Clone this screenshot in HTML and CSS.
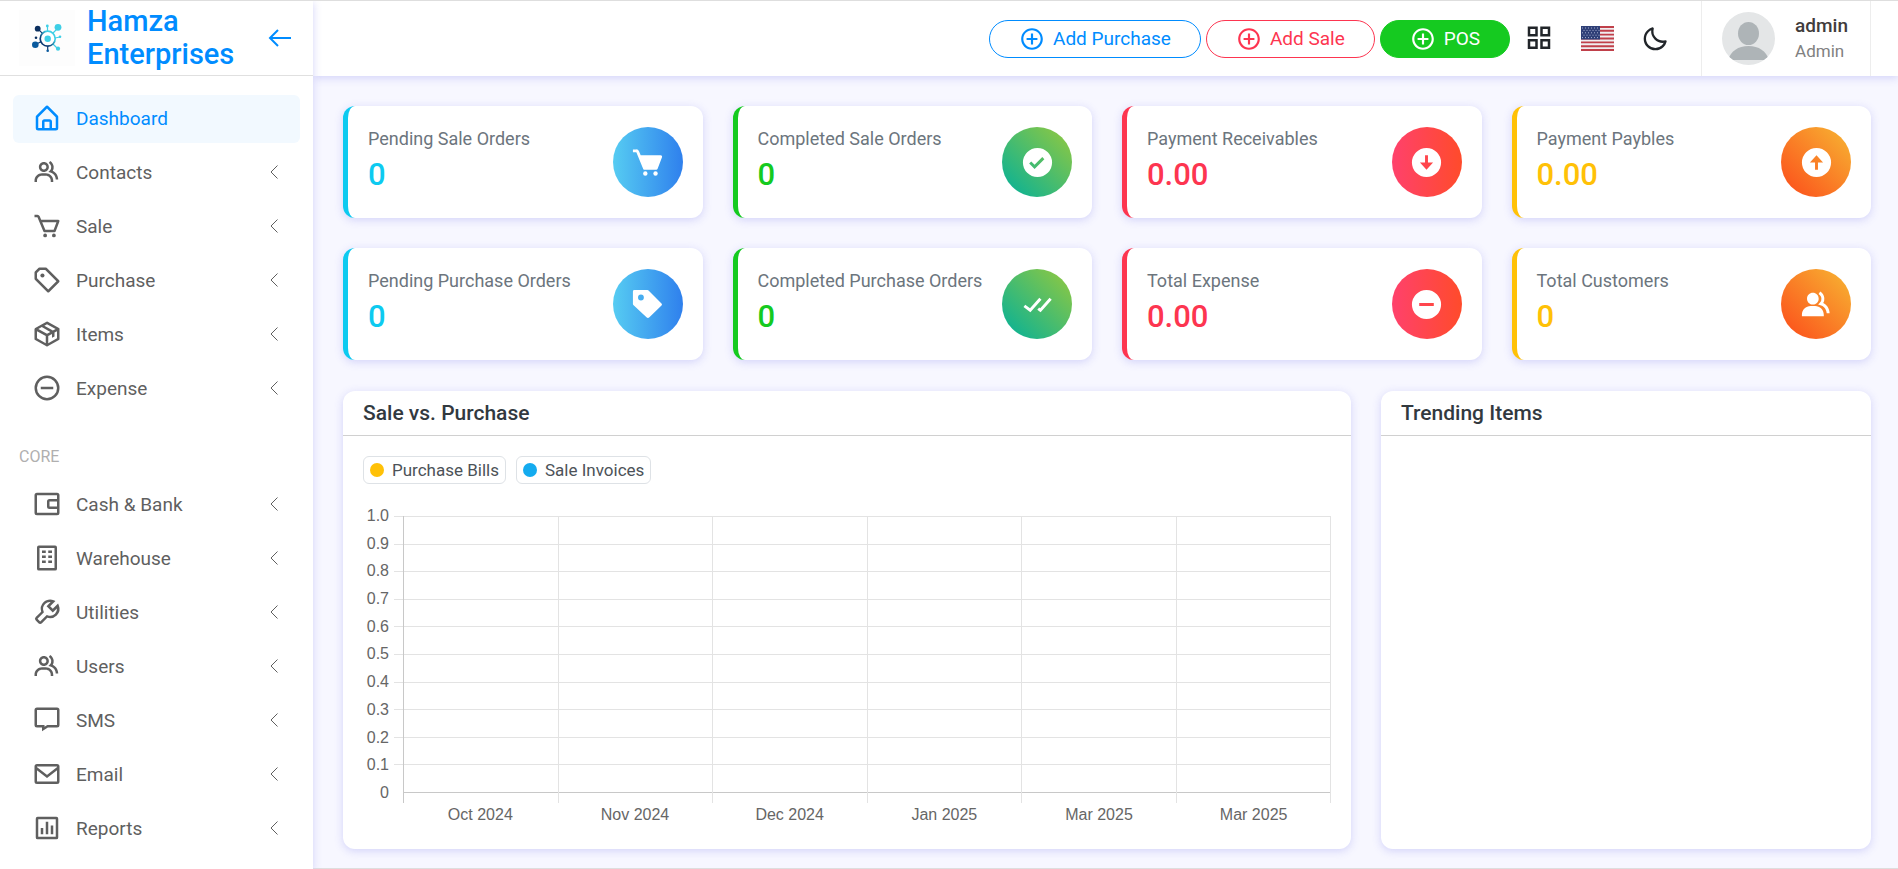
FILE: index.html
```html
<!DOCTYPE html>
<html lang="en">
<head>
<meta charset="utf-8">
<meta name="viewport" content="width=device-width, initial-scale=1">
<title>Dashboard - Hamza Enterprises</title>
<link rel="stylesheet" href="styles.css">
</head>
<body>
<svg class="sprite" aria-hidden="true">
  <symbol id="i-group" viewBox="0 0 24 24"><path d="M16.604 11.048a5.67 5.67 0 0 0 .751-3.44c-.179-1.784-1.175-3.361-2.803-4.44l-1.105 1.666c1.119.742 1.8 1.799 1.918 2.974a3.693 3.693 0 0 1-1.072 2.986l-1.192 1.192 1.618.475C18.951 13.701 19 17.957 19 18h2c0-1.789-.956-5.285-4.396-6.952z"/><path d="M9.5 12c2.206 0 4-1.794 4-4s-1.794-4-4-4-4 1.794-4 4 1.794 4 4 4zm0-6c1.103 0 2 .897 2 2s-.897 2-2 2-2-.897-2-2 .897-2 2-2zm1.5 7H8c-3.309 0-6 2.691-6 6v1h2v-1c0-2.206 1.794-4 4-4h3c2.206 0 4 1.794 4 4v1h2v-1c0-3.309-2.691-6-6-6z"/></symbol>
  <symbol id="i-plus" viewBox="0 0 24 24"><path d="M13 7h-2v4H7v2h4v4h2v-4h4v-2h-4z"/><path d="M12 2C6.486 2 2 6.486 2 12s4.486 10 10 10 10-4.486 10-10S17.514 2 12 2zm0 18c-4.411 0-8-3.589-8-8s3.589-8 8-8 8 3.589 8 8-3.589 8-8 8z"/></symbol>
  <symbol id="i-chevron" viewBox="0 0 8 14"><path d="M7.500.500L1 7l6.500 6.500" fill="none" stroke="currentColor"/></symbol>
</svg>

<aside class="sidebar">
  <div class="brand">
    <svg class="brand-logo" viewBox="0 0 56 56" role="img" aria-label="Logo">
      <defs><linearGradient id="ring" x1="0" y1="1" x2="1" y2="0"><stop offset=".3" stop-color="#0b3a72"/><stop offset=".7" stop-color="#3ecfe6"/></linearGradient></defs>
      <rect width="56" height="56" fill="#fdfdfd"/>
      <g stroke-width="1.200"><path stroke="#0b3a72" d="M18.700 18.700l5 5M16.500 34.500l6-3M28.700 36v4"/><path stroke="#3ecfe6" d="M34 23l5-5M34 34l5 5M28.500 21v-5M36 28l5-1"/></g>
      <circle cx="28.700" cy="28.700" r="7.500" fill="#fff" stroke="url(#ring)" stroke-width="1.700"/>
      <g fill="#3ecfe6"><circle cx="28.700" cy="28.700" r="3.200"/><circle cx="39" cy="17.300" r="3.400"/><circle cx="39" cy="38.700" r="2.100"/><circle cx="28.300" cy="16" r="1.400"/><circle cx="41" cy="26.700" r="1.300"/></g>
      <g fill="#0b2f5f"><circle cx="18.700" cy="18.700" r="2.900"/><circle cx="17" cy="27.700" r="1.300"/></g>
      <g fill="#0a5a9e"><circle cx="16.300" cy="34.700" r="3.300"/><circle cx="28.700" cy="40.700" r="1.300"/></g>
    </svg>
    <div class="brand-name">Hamza Enterprises</div>
    <button class="icon-button brand-toggle" aria-label="Collapse menu"><svg viewBox="0 0 24 20" fill="none" stroke="currentColor" stroke-width="2"><path d="M23 10H2M10 2l-8 8 8 8"/></svg></button>
  </div>
  <nav class="menu">
    <a class="menu-item active" href="#"><svg class="menu-icon" viewBox="0 0 24 24"><path d="M5 22h14a2 2 0 0 0 2-2v-9a1 1 0 0 0-.29-.71l-8-8a1 1 0 0 0-1.410 0l-8 8A1 1 0 0 0 3 11v9a2 2 0 0 0 2 2zm5-2v-5h4v5zm-5-8.590 7-7 7 7V20h-3v-5a2 2 0 0 0-2-2h-4a2 2 0 0 0-2 2v5H5z"/></svg><span>Dashboard</span></a>
    <a class="menu-item" href="#"><svg class="menu-icon"><use href="#i-group"/></svg><span>Contacts</span><svg class="chevron"><use href="#i-chevron"/></svg></a>
    <a class="menu-item" href="#"><svg class="menu-icon" viewBox="0 0 24 24"><path d="M21.822 7.431A1 1 0 0 0 21 7H7.333L6.179 4.230A1.994 1.994 0 0 0 4.333 3H2v2h2.333l4.744 11.385A1 1 0 0 0 10 17h8c.417 0 .79-.259.937-.648l3-8a1 1 0 0 0-.115-.921zM17.307 15h-6.640l-2.500-6h11.390l-2.250 6z"/><circle cx="10.500" cy="19.500" r="1.500"/><circle cx="17.500" cy="19.500" r="1.500"/></svg><span>Sale</span><svg class="chevron"><use href="#i-chevron"/></svg></a>
    <a class="menu-item" href="#"><svg class="menu-icon" viewBox="0 0 24 24"><path d="M11.707 2.293A.997.997 0 0 0 11 2H6a.997.997 0 0 0-.707.293l-3 3A.996.996 0 0 0 2 6v5c0 .266.105.52.293.707l10 10a.997.997 0 0 0 1.414 0l8-8a.999.999 0 0 0 0-1.414l-10-10zM13 19.586l-9-9V6.414L6.414 4h4.172l9 9L13 19.586z"/><circle cx="8.353" cy="8.353" r="1.647"/></svg><span>Purchase</span><svg class="chevron"><use href="#i-chevron"/></svg></a>
    <a class="menu-item" href="#"><svg class="menu-icon" viewBox="0 0 24 24"><path d="M22 8a.76.76 0 0 0 0-.21v-.08a.77.77 0 0 0-.07-.16.35.35 0 0 0-.05-.08l-.1-.13-.08-.06-.12-.09-9-5a1 1 0 0 0-1 0l-9 5-.09.07-.11.08a.41.41 0 0 0-.07.11.39.39 0 0 0-.08.1.59.59 0 0 0-.06.14.3.3 0 0 0 0 .1A.76.76 0 0 0 2 8v8a1 1 0 0 0 .52.87l9 5a.75.75 0 0 0 .13.06h.1a1.060 1.060 0 0 0 .5 0h.1l.14-.06 9-5A1 1 0 0 0 22 16V8zm-10 3.870L5.060 8l2.760-1.520 6.830 3.900zm0-7.720L18.940 8 16.700 9.250 9.870 5.340zM4 9.700l7 3.920v5.680l-7-3.890zm9 9.600v-5.680l3-1.680V15l2-1v-3.180l2-1.110v5.700z"/></svg><span>Items</span><svg class="chevron"><use href="#i-chevron"/></svg></a>
    <a class="menu-item" href="#"><svg class="menu-icon" viewBox="0 0 24 24"><path d="M7 11h10v2H7z"/><circle cx="12" cy="12" r="9" class="line"/></svg><span>Expense</span><svg class="chevron"><use href="#i-chevron"/></svg></a>
    <div class="menu-label">CORE</div>
    <a class="menu-item" href="#"><svg class="menu-icon" viewBox="0 0 24 24"><g class="line"><rect x="3" y="4" width="18" height="16" rx="1"/><path d="M21 9h-7a1 1 0 0 0-1 1v4a1 1 0 0 0 1 1h7"/></g></svg><span>Cash &amp; Bank</span><svg class="chevron"><use href="#i-chevron"/></svg></a>
    <a class="menu-item" href="#"><svg class="menu-icon" viewBox="0 0 24 24"><rect class="line" x="5" y="3" width="14" height="18" rx=".5"/><path d="M8 6h3v2H8zm5 0h3v2h-3zM8 10h3v2H8zm5 0h3v2h-3zM8 14h3v2H8zm5 0h3v2h-3z"/></svg><span>Warehouse</span><svg class="chevron"><use href="#i-chevron"/></svg></a>
    <a class="menu-item" href="#"><svg class="menu-icon" viewBox="0 0 24 24"><path fill-rule="evenodd" d="M5.122 21c.378.378.88.586 1.414.586S7.572 21.378 7.950 21l4.336-4.336a7.495 7.495 0 0 0 2.217.333 7.446 7.446 0 0 0 5.302-2.195 7.484 7.484 0 0 0 1.632-8.158l-.57-1.388-4.244 4.243-2.121-2.122 4.243-4.243-1.389-.571A7.478 7.478 0 0 0 14.499 2c-2.003 0-3.886.78-5.301 2.196a7.479 7.479 0 0 0-1.862 7.518L3 16.050a2.001 2.001 0 0 0 0 2.828zM9.548 12.208l-.254-.616a5.486 5.486 0 0 1 1.196-5.983 5.470 5.470 0 0 1 4.400-1.550l-3.218 3.318 4.951 4.950 3.318-3.220a5.470 5.470 0 0 1-1.550 4.280 5.490 5.490 0 0 1-5.980 1.190l-.62-.25-5.256 5.256-2.122-2.122z"/></svg><span>Utilities</span><svg class="chevron"><use href="#i-chevron"/></svg></a>
    <a class="menu-item" href="#"><svg class="menu-icon"><use href="#i-group"/></svg><span>Users</span><svg class="chevron"><use href="#i-chevron"/></svg></a>
    <a class="menu-item" href="#"><svg class="menu-icon" viewBox="0 0 24 24"><path class="line" d="M4 3h16a1 1 0 0 1 1 1v12a1 1 0 0 1-1 1h-7.500L9 19.200V17H4a1 1 0 0 1-1-1V4a1 1 0 0 1 1-1z"/></svg><span>SMS</span><svg class="chevron"><use href="#i-chevron"/></svg></a>
    <a class="menu-item" href="#"><svg class="menu-icon" viewBox="0 0 24 24"><g class="line"><rect x="3" y="5" width="18" height="14" rx="1"/><path d="M3 7l9 7 9-7"/></g></svg><span>Email</span><svg class="chevron"><use href="#i-chevron"/></svg></a>
    <a class="menu-item" href="#"><svg class="menu-icon" viewBox="0 0 24 24"><rect class="line" x="4" y="4" width="16" height="16" rx=".5"/><path d="M7 12h2v5H7zM11 7h2v10h-2zM15 10h2v7h-2z"/></svg><span>Reports</span><svg class="chevron"><use href="#i-chevron"/></svg></a>
  </nav>
</aside>

<div class="page">
  <header class="topbar">
    <div class="actions">
      <button class="pill pill-primary"><svg class="pill-icon"><use href="#i-plus"/></svg>Add Purchase</button>
      <button class="pill pill-danger"><svg class="pill-icon"><use href="#i-plus"/></svg>Add Sale</button>
      <button class="pill pill-success"><svg class="pill-icon"><use href="#i-plus"/></svg>POS</button>
    </div>
    <div class="tools">
      <button class="icon-button" aria-label="Apps"><svg width="30" height="30" viewBox="0 0 24 24" fill="none" stroke="currentColor" stroke-width="2"><path d="M4 3h6v6H4zM14 3h6v6h-6zM4 13h6v6H4zM14 13h6v6h-6z"/></svg></button>
      <button class="icon-button" aria-label="Language">
        <svg class="flag" width="33" height="25" viewBox="0 0 33 25"><rect width="33" height="25" fill="#f0eef0"/><path stroke="#c0404a" stroke-width="1.920" d="M0 .96h33M0 4.800h33M0 8.650h33M0 12.500h33M0 16.350h33M0 20.200h33M0 24.040h33"/><rect width="19" height="13.500" fill="#2f3f77"/><path stroke="#a9b2d0" stroke-width="1" stroke-dasharray="1 2" d="M1 2h17M2.500 4.400h16M1 6.800h17M2.500 9.200h16M1 11.600h17"/></svg>
      </button>
      <button class="icon-button" aria-label="Dark mode"><svg width="28" height="28" viewBox="0 0 24 24" fill="currentColor"><path d="M20.742 13.045a8.088 8.088 0 0 1-2.077.271c-2.135 0-4.140-.83-5.646-2.336a8.025 8.025 0 0 1-2.064-7.723A1 1 0 0 0 9.730 2.034a10.014 10.014 0 0 0-4.489 2.582c-3.898 3.898-3.898 10.243 0 14.143a9.937 9.937 0 0 0 7.072 2.930 9.930 9.930 0 0 0 7.070-2.929 10.007 10.007 0 0 0 2.583-4.491 1.001 1.001 0 0 0-1.224-1.224zm-2.772 4.301a7.947 7.947 0 0 1-5.656 2.343 7.953 7.953 0 0 1-5.658-2.344c-3.118-3.119-3.118-8.195 0-11.314a7.923 7.923 0 0 1 2.060-1.483 10.027 10.027 0 0 0 2.890 7.848 9.972 9.972 0 0 0 7.848 2.891 8.036 8.036 0 0 1-1.484 2.059z"/></svg></button>
    </div>
    <a class="user" href="#">
      <svg class="avatar" viewBox="0 0 53 53"><defs><clipPath id="disc"><circle cx="26.500" cy="26.500" r="26.500"/></clipPath></defs><g clip-path="url(#disc)"><rect width="53" height="53" fill="#e4e6e7"/><g fill="#aeb4b7"><ellipse cx="26.500" cy="21.500" rx="10.500" ry="11.500"/><path d="M6 48c3-9 10-14 20.500-14S44 39 47 48z"/></g></g></svg>
      <span class="user-text"><span class="user-name">admin</span><span class="user-role">Admin</span></span>
    </a>
  </header>

  <main class="content">
    <section class="stats">
      <article class="stat info"><div><p>Pending Sale Orders</p><strong>0</strong></div><span class="badge blue"><svg viewBox="0 0 24 24"><path d="M21.822 7.431A1 1 0 0 0 21 7H7.333L6.179 4.230A1.994 1.994 0 0 0 4.333 3H2v2h2.333l4.744 11.385A1 1 0 0 0 10 17h8c.417 0 .79-.259.937-.648l3-8a1 1 0 0 0-.115-.921z"/><circle cx="10.500" cy="19.500" r="1.500"/><circle cx="17.500" cy="19.500" r="1.500"/></svg></span></article>
      <article class="stat success"><div><p>Completed Sale Orders</p><strong>0</strong></div><span class="badge green"><svg viewBox="0 0 24 24"><path fill-rule="evenodd" d="M12 2a10 10 0 1 0 0 20 10 10 0 0 0 0-20zm-1.999 14.413-3.713-3.705L7.700 11.292l2.299 2.295 5.294-5.294 1.414 1.414z"/></svg></span></article>
      <article class="stat danger"><div><p>Payment Receivables</p><strong>0.00</strong></div><span class="badge red"><svg viewBox="0 0 24 24"><path fill-rule="evenodd" d="M12 2a10 10 0 1 0 0 20 10 10 0 0 0 0-20zm0 15-4.500-5H11V7h2v5h3.500z"/></svg></span></article>
      <article class="stat warning"><div><p>Payment Paybles</p><strong>0.00</strong></div><span class="badge orange"><svg viewBox="0 0 24 24"><path fill-rule="evenodd" d="M12 2a10 10 0 1 0 0 20 10 10 0 0 0 0-20zm0 5 4.500 5H13v5h-2v-5H7.500z"/></svg></span></article>
      <article class="stat info"><div><p>Pending Purchase Orders</p><strong>0</strong></div><span class="badge blue"><svg viewBox="0 0 24 24"><path fill-rule="evenodd" d="M12.700 2.400A1 1 0 0 0 12 2H3a1 1 0 0 0-1 1v8.600c0 .3.100.5.300.700l9 8.500a1.500 1.500 0 0 0 2 0l8.300-8.100a1 1 0 0 0 0-1.400zM7.500 5.200a2 2 0 1 1 0 4 2 2 0 0 1 0-4z"/></svg></span></article>
      <article class="stat success"><div><p>Completed Purchase Orders</p><strong>0</strong></div><span class="badge green"><svg viewBox="0 0 24 24"><path d="m2.394 13.742 4.743 3.620 7.616-8.704-1.506-1.316-6.384 7.296-3.257-2.486zm19.359-5.084-1.506-1.316-6.369 7.279-.753-.602-1.250 1.562 2.247 1.798z"/></svg></span></article>
      <article class="stat danger"><div><p>Total Expense</p><strong>0.00</strong></div><span class="badge red"><svg viewBox="0 0 24 24"><path fill-rule="evenodd" d="M12 2a10 10 0 1 0 0 20 10 10 0 0 0 0-20zm-5 9h10v2H7z"/></svg></span></article>
      <article class="stat warning"><div><p>Total Customers</p><strong>0</strong></div><span class="badge orange"><svg viewBox="0 0 24 24"><path d="M9.500 12c2.206 0 4-1.794 4-4s-1.794-4-4-4-4 1.794-4 4 1.794 4 4 4zm1.500 1H8c-3.309 0-6 2.691-6 6v1h15v-1c0-3.309-2.691-6-6-6z"/><path d="M16.604 11.048a5.670 5.670 0 0 0 .751-3.440c-.179-1.784-1.175-3.361-2.803-4.440l-1.105 1.666c1.119.742 1.800 1.799 1.918 2.974a3.693 3.693 0 0 1-1.072 2.986l-1.192 1.192 1.618.475C18.951 13.701 19 17.957 19 18h2c0-1.789-.956-5.285-4.396-6.952z"/></svg></span></article>
    </section>

    <section class="panels">
      <article class="panel">
        <h2 class="panel-title">Sale vs. Purchase</h2>
        <div class="panel-body">
          <div class="legend">
            <span class="legend-item"><i class="dot yellow"></i>Purchase Bills</span>
            <span class="legend-item"><i class="dot sky"></i>Sale Invoices</span>
          </div>
          <div class="chart">
            <div class="y-labels"><span>1.0</span><span>0.9</span><span>0.8</span><span>0.7</span><span>0.6</span><span>0.5</span><span>0.4</span><span>0.3</span><span>0.2</span><span>0.1</span><span>0</span></div>
            <div class="plot">
              <div class="rows"><i></i><i></i><i></i><i></i><i></i><i></i><i></i><i></i><i></i><i></i><i></i></div>
              <div class="cols"><i></i><i></i><i></i><i></i><i></i><i></i><i></i></div>
            </div>
            <div class="x-labels"><span>Oct 2024</span><span>Nov 2024</span><span>Dec 2024</span><span>Jan 2025</span><span>Mar 2025</span><span>Mar 2025</span></div>
          </div>
        </div>
      </article>
      <article class="panel">
        <h2 class="panel-title">Trending Items</h2>
      </article>
    </section>
  </main>
</div>
</body>
</html>
```
FILE: styles.css
```css
* { box-sizing: border-box; }

body {
  margin: 0;
  min-height: 100vh;
  display: grid;
  grid-template-columns: 313px minmax(0, 1fr);
  border-top: 1px solid #dedede;
  background: #f7f7ff;
  color: #4c5258;
  font-family: Roboto, "Liberation Sans", sans-serif;
  font-size: 18px;
}

a { color: inherit; text-decoration: none; }
button { font: inherit; cursor: pointer; }
p, h2 { margin: 0; }
.sprite { display: none; }

.icon-button {
  display: flex;
  padding: 0;
  border: 0;
  background: none;
  color: #212529;
}

/* Sidebar */
.sidebar {
  background: #fff;
  box-shadow: 0 2px 8px rgba(206, 206, 248, .9);
  z-index: 2;
}
.brand {
  display: flex;
  align-items: center;
  height: 75px;
  padding: 0 21px 0 19px;
  border-bottom: 1px solid #e0e0e0;
}
.brand-logo { width: 56px; height: 56px; flex: none; }
.brand-name {
  flex: 1;
  margin-left: 12px;
  color: #008cff;
  font-size: 29px;
  font-weight: 500;
  line-height: 33px;
}
.brand-toggle { color: #008cff; }
.brand-toggle svg { width: 24px; height: 20px; }

.menu {
  display: flex;
  flex-direction: column;
  gap: 6px;
  padding: 19px 13px 16px;
}
.menu-item {
  display: flex;
  align-items: center;
  gap: 14px;
  height: 48px;
  padding: 0 22px 2px 19px;
  border-radius: 6px;
  color: #5f5f5f;
  font-size: 19px;
}
.menu-item.active { background: #f2f9ff; color: #008cff; }
.menu-icon { width: 30px; height: 30px; fill: currentColor; }
.line { fill: none; stroke: currentColor; stroke-width: 2; }
.chevron { width: 8px; height: 14px; margin-left: auto; }
.menu-label {
  padding: 28px 0 8px 6px;
  color: #b0afaf;
  font-size: 16px;
  line-height: 20px;
}

/* Top bar */
.page { display: flex; flex-direction: column; border-bottom: 1px solid #dedede; }
.topbar {
  display: flex;
  justify-content: flex-end;
  align-items: center;
  height: 75px;
  padding-right: 27px;
  background: #fff;
  box-shadow: 0 2px 8px rgba(206, 206, 248, .9);
}
.actions { display: flex; gap: 5px; }
.pill {
  display: flex;
  align-items: center;
  gap: 8px;
  height: 38px;
  padding: 0 29px;
  border: 1px solid;
  border-radius: 19px;
  background: #fff;
  font-size: 19px;
}
.pill-icon { width: 26px; height: 26px; fill: currentColor; }
.pill-primary { color: #008cff; }
.pill-danger { color: #fd3550; }
.pill-success { border-color: #15ca20; background: #15ca20; color: #fff; }
.tools { display: flex; align-items: center; gap: 27px; margin: 0 32px 0 14px; }
.user {
  display: flex;
  align-items: center;
  gap: 20px;
  height: 100%;
  padding: 0 22px 0 20px;
  border: solid #ededed;
  border-width: 0 1px;
}
.avatar { width: 53px; height: 53px; }
.user-text { display: flex; flex-direction: column; }
.user-name { color: #413c3c; font-size: 19px; font-weight: 500; line-height: 26px; }
.user-role { color: #818181; font-size: 17px; line-height: 25px; }

/* Stat cards */
.content {
  flex: 1;
  display: flex;
  flex-direction: column;
  gap: 31px;
  padding: 30px 27px 19px 30px;
}
.stats {
  display: grid;
  grid-template-columns: repeat(4, minmax(0, 1fr));
  gap: 30px;
}
.stat, .panel {
  border-radius: 12px;
  background: #fff;
  box-shadow: 0 2px 8px rgba(206, 206, 248, .9);
}
.stat {
  display: flex;
  justify-content: space-between;
  align-items: center;
  padding: 21px 20px;
  border-left: 5px solid;
}
.stat p { color: #6c757d; font-size: 18px; line-height: 24px; white-space: nowrap; }
.stat strong {
  display: block;
  margin: 6px 0 4px;
  font-size: 31px;
  font-weight: 500;
  line-height: 36px;
}
.info { color: #0dcaf0; }
.success { color: #15ca20; }
.danger { color: #fd3550; }
.warning { color: #ffc107; }
.badge {
  display: grid;
  place-items: center;
  flex: none;
  width: 70px;
  height: 70px;
  border-radius: 50%;
}
.badge svg { width: 35px; height: 35px; fill: #fff; }
.blue { background: linear-gradient(to right, #56ccf2, #2f80ed); }
.green { background: linear-gradient(45deg, #00b09b, #96c93d); }
.red { background: linear-gradient(to right, #ff416c, #ff4b2b); }
.orange { background: linear-gradient(45deg, #fc4a1a, #f7b733); }

/* Panels */
.panels {
  flex: 1;
  display: grid;
  grid-template-columns: minmax(0, 1008fr) minmax(0, 490fr);
  gap: 30px;
}
.panel { display: flex; flex-direction: column; }
.panel-title {
  padding: 10px 20px;
  border-bottom: 1px solid #d0d0d0;
  color: #32393f;
  font-size: 21px;
  font-weight: 500;
  line-height: 24px;
}
.panel-body { flex: 1; display: flex; flex-direction: column; padding: 20px 20px 24px; }
.legend { display: flex; gap: 10px; }
.legend-item {
  display: flex;
  align-items: center;
  gap: 8px;
  height: 28px;
  padding: 0 6px;
  border: 1px solid #dee2e6;
  border-radius: 6px;
  font-size: 17px;
}
.dot { width: 14px; height: 14px; border-radius: 50%; }
.yellow { background: #ffc107; }
.sky { background: #14abef; }

/* Chart */
.chart {
  flex: 1;
  display: grid;
  grid-template-columns: 26px minmax(0, 1fr);
  grid-template-rows: minmax(240px, 1fr) auto;
  column-gap: 5px;
  margin-top: 32px;
  color: #666;
  font-family: "Liberation Sans", Arial, sans-serif;
  font-size: 16px;
  line-height: 20px;
}
.y-labels {
  display: flex;
  flex-direction: column;
  justify-content: space-between;
  margin: -10px 0 0;
  text-align: right;
}
.plot { display: grid; }
.rows, .cols { grid-area: 1 / 1; display: flex; justify-content: space-between; }
.rows { flex-direction: column; margin-bottom: 10px; }
.rows i { height: 1px; background: #e3e3e3; }
.rows i:last-child { margin-left: 9px; background: #c8c8c8; }
.cols { margin-left: 9px; }
.cols i { width: 1px; background: #e3e3e3; }
.cols i:first-child { background: #c8c8c8; }
.x-labels {
  grid-column: 2;
  display: grid;
  grid-template-columns: repeat(6, 1fr);
  margin-left: 9px;
  padding-top: 2px;
  text-align: center;
}
```
